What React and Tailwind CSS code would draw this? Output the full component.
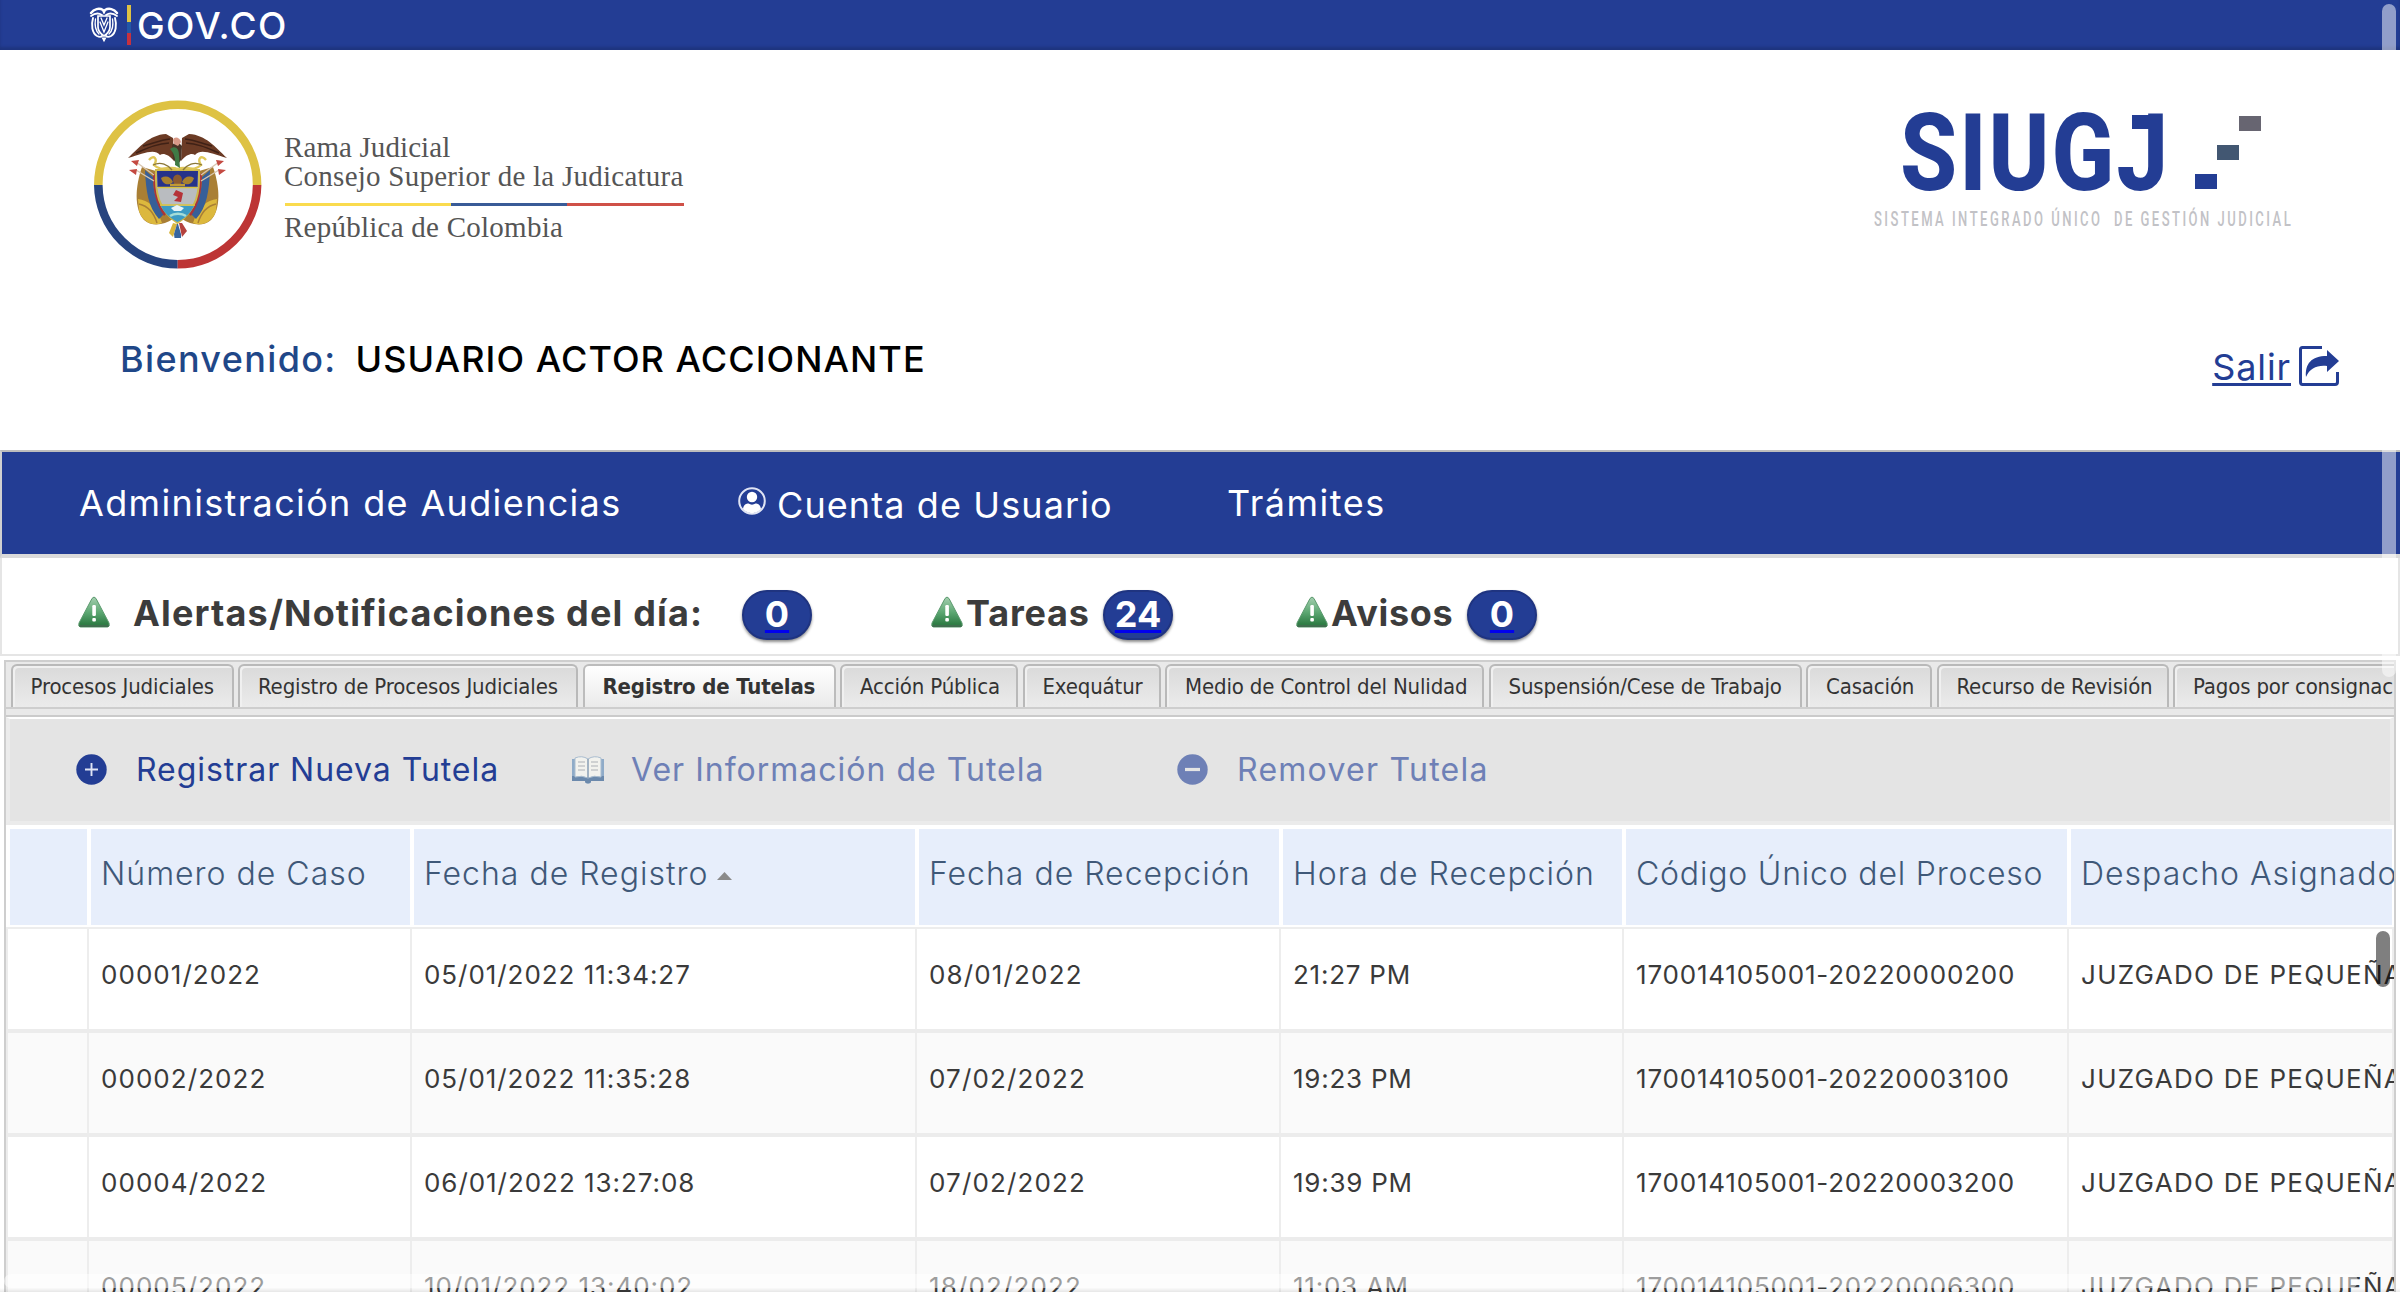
import React from "react";

const TABS = [
  { label: "Procesos Judiciales", width: "w-[223px]" },
  { label: "Registro de Procesos Judiciales", width: "w-[340px]" },
  { label: "Registro de Tutelas", width: "w-[253px]", active: true },
  { label: "Acción Pública", width: "w-[178px]" },
  { label: "Exequátur", width: "w-[138px]" },
  { label: "Medio de Control del Nulidad", width: "w-[319px]" },
  { label: "Suspensión/Cese de Trabajo", width: "w-[313px]" },
  { label: "Casación", width: "w-[126px]" },
  { label: "Recurso de Revisión", width: "w-[232px]" },
  { label: "Pagos por consignación", width: "w-[270px]" },
];

const COLUMNS = [
  "",
  "Número de Caso",
  "Fecha de Registro",
  "Fecha de Recepción",
  "Hora de Recepción",
  "Código Único del Proceso",
  "Despacho Asignado",
];

const ROWS = [
  ["", "00001/2022", "05/01/2022 11:34:27", "08/01/2022", "21:27 PM", "170014105001-20220000200", "JUZGADO DE PEQUEÑAS"],
  ["", "00002/2022", "05/01/2022 11:35:28", "07/02/2022", "19:23 PM", "170014105001-20220003100", "JUZGADO DE PEQUEÑAS"],
  ["", "00004/2022", "06/01/2022 13:27:08", "07/02/2022", "19:39 PM", "170014105001-20220003200", "JUZGADO DE PEQUEÑAS"],
  ["", "00005/2022", "10/01/2022 13:40:02", "18/02/2022", "11:03 AM", "170014105001-20220006300", "JUZGADO DE PEQUEÑAS"],
];

const GRID = "grid grid-cols-[83px_323px_505px_364px_343px_445px_325px]";

const CELL_TRACKING = [
  "tracking-[1px]",
  "tracking-[1.05px]",
  "tracking-[0.95px]",
  "tracking-[1.15px]",
  "tracking-[0.75px]",
  "tracking-[0.8px]",
  "tracking-[1.3px]",
];

function GovShield() {
  return (
    <svg className="h-[36px] w-[30px]" viewBox="0 0 30 36" fill="none" stroke="#fff" strokeLinecap="round">
      <path d="M2 6C5 2 10 0.5 14 3L15 5L16 3C20 0.5 25 2 28 6" strokeWidth="2.4" />
      <path d="M2 9C6 6 10 6 13 8M28 9C24 6 20 6 17 8" strokeWidth="1.8" />
      <path d="M9 9H21V20C21 24 18 27 15 29C12 27 9 24 9 20Z" strokeWidth="1.7" />
      <path d="M4 11C2 18 3 26 8 29C10 30 12 30 13 29M26 11C28 18 27 26 22 29C20 30 18 30 17 29" strokeWidth="1.9" />
      <path d="M6.500 12C5.500 18 7 24 10 27M23.500 12C24.500 18 23 24 20 27M12 11L15 18L18 11M11 15L15 25L19 15" strokeWidth="1.3" />
      <path d="M13.500 31L15 34L16.500 31Z" fill="#fff" strokeWidth="1.2" />
    </svg>
  );
}

function Emblem() {
  return (
    <svg className="h-[170px] w-[168px] shrink-0" viewBox="0 0 168 170">
      <g fill="none" strokeWidth="8.6">
        <path d="M4.300 86A79.400 80.200 0 0 1 163.100 86" stroke="#dec244" />
        <path d="M4.300 86A79.400 80.200 0 0 0 83.700 165.200" stroke="#27447f" />
        <path d="M163.100 86A79.400 80.200 0 0 1 83.700 165.200" stroke="#bd3535" />
      </g>
      {/* flags */}
      <path d="M48 68C41 88 40 110 50 121C58 128 70 126 79 120L62 72Z" fill="#a97f35" />
      <path d="M119 68C126 88 127 110 117 121C109 128 97 126 88 120L105 72Z" fill="#a97f35" />
      <path d="M44 100C54 101 63 108 68 124C58 128 48 122 45 112ZM123 100C113 101 104 108 99 124C109 128 119 122 122 112Z" fill="#dcb83d" />
      <path d="M45 105C54 107 60 114 63 124M122 105C113 107 107 114 104 124" stroke="#a97f35" strokeWidth="1.5" fill="none" />
      <path d="M51 71L59 78C59 93 63 105 70 115L65 120C54 108 52 92 51 71ZM116 71L108 78C108 93 104 105 97 115L102 120C113 108 115 92 116 71Z" fill="#375f98" />
      <path d="M59 74L64 78C63 93 67 105 74 113L70 117C61 104 59 90 59 74ZM108 74L103 78C104 93 100 105 93 113L97 117C106 104 108 90 108 74Z" fill="#a9343a" />
      {/* spears */}
      <path d="M42 63L60 76M42 71L60 82M125 63L107 76M125 71L107 82" stroke="#d8c6b0" strokeWidth="1.4" />
      <path d="M37 62L45 61L43 67ZM35 71L43 70L42 76ZM130 62L122 61L124 67ZM132 71L124 70L125 76Z" fill="#c44a42" />
      {/* shield */}
      <path d="M62 71H105C106 93 103 111 83.500 124C64 111 61 93 62 71Z" fill="#b9bcc0" stroke="#cdb94d" strokeWidth="2" />
      <path d="M63 72H104L103.500 88H63.500Z" fill="#26328a" />
      <path d="M67 79C72 76 77 78 79 83C75 87 69 86 67 79ZM100 79C95 76 90 78 88 83C92 87 98 86 100 79Z" fill="#a8812f" />
      <ellipse cx="83.500" cy="81" rx="4.500" ry="5.500" fill="#8b5b30" />
      <path d="M76 86H91" stroke="#c19a36" strokeWidth="2.5" />
      <path d="M64 88.500H103M66 106H101" stroke="#d8c23f" strokeWidth="1.4" />
      <path d="M82 91L89 94L87 103L80 102L84 98L79 96Z" fill="#b53238" />
      <path d="M67 107H100C96 115 90 120 83.500 123C76 119 70 114 67 107Z" fill="#3c9bc4" />
      <path d="M77 109L83 106L90 109L87 112H80Z" fill="#e8f3f7" />
      <path d="M76 117C80 114 88 114 92 117" stroke="#a5ddd7" strokeWidth="2.5" fill="none" />
      {/* ribbon and laurel */}
      <path d="M55 61C60 55 64 60 60 66C68 74 75 66 83.500 70C92 66 99 74 107 66C103 60 107 55 112 61" stroke="#dfc758" strokeWidth="2.4" fill="none" />
      <path d="M59 66C67 62 74 66 78 71M108 66C100 62 93 66 89 71" stroke="#8a7738" strokeWidth="1.3" fill="none" />
      {/* condor */}
      <path d="M34 59C46 48 55 36 72 35L79 39L80 62C74 55 69 54 66 56C60 49 49 55 34 59Z" fill="#6b3b25" />
      <path d="M133 59C121 48 112 36 95 35L88 39L87 62C93 55 98 54 101 56C107 49 118 55 133 59Z" fill="#6b3b25" />
      <path d="M42 54C54 49 62 45 75 44M49 47C58 45 66 41 76 40M125 54C113 49 105 45 92 44M118 47C109 45 101 41 91 40" stroke="#3f2116" strokeWidth="1.5" fill="none" />
      <path d="M78 46L83 42L88 47L87 61L83.500 66L79 60Z" fill="#4a3426" />
      <path d="M79 41C80 37 86 38 87 43L84 47L80 45Z" fill="#d99a88" />
      <path d="M76 50C81 46 85 49 85 56L86 69L81 66C82 58 79 53 76 50Z" fill="#3f7a45" />
      {/* tassels */}
      <path d="M79 124L75 134L79 138L83 125Z" fill="#d8b53e" />
      <path d="M83 125L80 135L80.500 139H87L87 135L84 125Z" fill="#37659f" />
      <path d="M85 124L88 138L93 132L88 124Z" fill="#b5423e" />
    </svg>
  );
}

function ExitIcon() {
  return (
    <svg className="h-[40px] w-[40px]" viewBox="0 0 40 40">
      <path d="M23 1.500H3.500Q1.500 1.500 1.500 3.500V36Q1.500 38.500 3.500 38.500H36Q38.500 38.500 38.500 36V26" fill="none" stroke="#233d94" strokeWidth="3" />
      <path d="M7 31C6 18 12 10 28 10V4L40 15L28 26V20C18 19 11 22 7 31Z" fill="#233d94" />
    </svg>
  );
}

function UserIcon() {
  return (
    <svg className="-mt-1 h-[30px] w-[30px]" viewBox="0 0 30 30">
      <circle cx="15" cy="15" r="12.800" fill="none" stroke="#dfe4f4" strokeWidth="2" />
      <circle cx="15" cy="11" r="5.200" fill="#fff" />
      <path d="M6 23C6.500 18.500 9.500 17.500 11.500 17.500C13.500 19 16.500 19 18.500 17.500C20.500 17.500 23.500 18.500 24 23C19 28.500 11 28.500 6 23Z" fill="#fff" />
    </svg>
  );
}

function AlertIcon() {
  return (
    <svg className="-mt-1.5 h-[32px] w-[32px] shrink-0" viewBox="0 0 32 32">
      <defs>
        <linearGradient id="alertFill" x1="0" y1="0" x2="0" y2="1">
          <stop offset="0" stopColor="#a5cfb0" />
          <stop offset="0.500" stopColor="#5da873" />
          <stop offset="0.900" stopColor="#2f7d45" />
        </linearGradient>
      </defs>
      <path d="M14 2.500Q16 -0.500 18 2.500L31 27Q32 31 29.500 31H2.500Q0 31 1 27Z" fill="url(#alertFill)" stroke="#5b9a6e" strokeWidth="1" />
      <path d="M1.500 30H30.500" stroke="#3f6e4e" strokeWidth="2" />
      <rect x="14.300" y="9" width="3.600" height="11" rx="1.200" fill="#fff" />
      <rect x="14.300" y="22" width="3.600" height="3.600" rx="1" fill="#fff" />
    </svg>
  );
}

function BookIcon() {
  return (
    <svg className="h-[28px] w-[32px]" viewBox="0 0 32 28">
      <path d="M0 3H32V25H19Q19 27.500 16 27.500Q13 27.500 13 25H0Z" fill="#8fabc8" />
      <path d="M0 20H32V25H19Q19 27.500 16 27.500Q13 27.500 13 25H0Z" fill="#6b89ac" />
      <path d="M3 2Q10 -1 16 3Q22 -1 29 2V21Q22 19 16 22Q10 19 3 21Z" fill="#f2f2ee" stroke="#a9bccf" strokeWidth="1" />
      <path d="M16 3V22" stroke="#8fa3b8" strokeWidth="1.600" />
      <path d="M6 6H13M6 10H13M6 14H13M19 6H26M19 10H26M19 14H26" stroke="#cfd1d2" strokeWidth="2" />
    </svg>
  );
}

function RoundSign({ minus }) {
  return (
    <svg className="-mt-0.5 h-[31px] w-[31px]" viewBox="0 0 31 31">
      <circle cx="15.500" cy="15.500" r="15.200" fill={minus ? "#6e80b6" : "#233d94"} />
      {minus ? (
        <path d="M8 15.500H23" stroke="#e4e4e4" strokeWidth="3.200" />
      ) : (
        <path d="M9 15.500H22M15.500 9V22" stroke="#dfe4f4" strokeWidth="1.900" />
      )}
    </svg>
  );
}

function Counter({ value }) {
  return (
    <span className="flex h-[50px] w-[70px] items-center justify-center rounded-[25px] border-2 border-[#1f3480] bg-[#233d94] text-[36px] leading-none font-bold text-white shadow-[0_2px_3px_rgba(0,0,0,0.45)]">
      <a className="-mt-0.5 underline decoration-[#0000ee] decoration-[3px] underline-offset-[3px] [text-decoration-skip-ink:none]">{value}</a>
    </span>
  );
}

function TopBar() {
  return (
    <div className="relative flex h-[50px] items-center bg-[#233d94] pl-[89px] shadow-[inset_0_-3px_3px_rgba(0,0,0,0.15)]">
      <GovShield />
      <div className="ml-2 flex h-[40px] w-[4px] flex-col">
        <span className="flex-1 bg-[#dec244]" />
        <span className="flex-[0.7] bg-[#2157a8]" />
        <span className="flex-[0.7] bg-[#c6313f]" />
      </div>
      <span className="ml-[6px] pt-px text-[37px] leading-none font-medium tracking-[1.4px] text-white">GOV.CO</span>
      <span className="absolute top-[4px] right-[4px] h-[46px] w-[14px] rounded-t-full bg-white/50" />
    </div>
  );
}

function Header() {
  return (
    <header className="flex h-[400px] flex-col">
      <div className="flex h-[280px] justify-between">
        <div className="flex pt-[49px] pl-[94px]">
          <Emblem />
          <div className="ml-[22px] flex w-[402px] flex-col pt-[34px] font-['Liberation_Serif',serif] text-[29px] leading-[29px] whitespace-nowrap text-[#555]">
            <span className="tracking-[0.1px]">Rama Judicial</span>
            <span className="tracking-[0.25px]">Consejo Superior de la Judicatura</span>
            <div className="mt-[12px] mb-[7px] ml-px flex h-[3px] w-[399px]">
              <span className="w-[166px] bg-[#fadb4e]" />
              <span className="w-[116px] bg-[#395b97]" />
              <span className="w-[117px] bg-[#cf5047]" />
            </div>
            <span className="tracking-[0.25px]">República de Colombia</span>
          </div>
        </div>
        <div className="flex w-[526px] flex-col pt-[62px]">
          <div className="flex h-[82px]">
            <div className="relative ml-[26px] w-[295px]">
              <span className="inline-block origin-left scale-x-[0.86] pt-px font-[Roboto,sans-serif] text-[107px] leading-[82px] font-extrabold tracking-[2.4px] text-[#233d94]">SIUGJ</span>
              <span className="absolute top-[3px] left-[232px] h-[14px] w-[26px] bg-[#233d94]" />
            </div>
            <div className="grid w-[66px] grid-cols-3 grid-rows-[29px_29px_15px] pt-[4px]">
              <span className="col-start-3 row-start-1 h-[15px] bg-[#676571]" />
              <span className="col-start-2 row-start-2 h-[15px] bg-[#425772]" />
              <span className="col-start-1 row-start-3 h-[15px] bg-[#233d94]" />
            </div>
          </div>
          <span className="mt-[13px] inline-block w-[700px] origin-left scale-x-[0.62] font-[Roboto,sans-serif] text-[21px] leading-[24px] font-medium tracking-[4px] whitespace-pre text-[#c2c2c6]">SISTEMA INTEGRADO ÚNICO  DE GESTIÓN JUDICIAL</span>
        </div>
      </div>
      <div className="flex justify-between pr-[61px] pl-[120px] text-[36px] leading-[60px]">
        <div className="-mt-px font-medium">
          <span className="tracking-[1.35px] text-[#1f4788]">Bienvenido:</span>
          <span className="ml-[19px] tracking-[1.05px] text-black">USUARIO ACTOR ACCIONANTE</span>
        </div>
        <div className="flex items-center gap-[8px] pt-[4px] text-[#233d94]">
          <a className="pt-[3px] tracking-[0.9px] underline decoration-[3px] underline-offset-[3px]">Salir</a>
          <ExitIcon />
        </div>
      </div>
    </header>
  );
}

function NavBar() {
  return (
    <nav className="flex h-[108px] items-center border-t-2 border-b-4 border-l-2 border-t-[#bdbdbd] border-b-[#dadada] border-l-[#d0d0d0] bg-[#233d94] text-[36px] leading-none tracking-[1.35px] whitespace-nowrap text-white">
      <span className="w-[655px] pl-[77px]">Administración de Audiencias</span>
      <span className="flex w-[491px] items-center pl-[80px]">
        <UserIcon />
        <span className="ml-[10px] pt-1 tracking-[1.1px]">Cuenta de Usuario</span>
      </span>
      <span className="pl-[79px] tracking-[1.5px]">Trámites</span>
    </nav>
  );
}

function AlertBar() {
  return (
    <div className="flex h-[98px] items-center border-x-2 border-b-2 border-[#e5e5e5] pt-[18px] pl-[76px] text-[36px] leading-none font-bold whitespace-nowrap text-[#3c3c3c]">
      <div className="flex w-[853px] items-center">
        <AlertIcon />
        <span className="-mt-1 ml-[23px] w-[609px] tracking-[1.15px]">Alertas/Notificaciones del día:</span>
        <Counter value="0" />
      </div>
      <div className="flex w-[365px] items-center">
        <AlertIcon />
        <span className="-mt-1 ml-[3px] w-[137px] tracking-[0.8px]">Tareas</span>
        <Counter value="24" />
      </div>
      <div className="flex items-center">
        <AlertIcon />
        <span className="-mt-1 ml-[3px] w-[136px] tracking-[0.7px]">Avisos</span>
        <Counter value="0" />
      </div>
    </div>
  );
}

function Tabs() {
  return (
    <div className="flex h-[55px] flex-col border-b-2 border-[#cbcbcb] bg-[#e9e9e9]">
      <div className="flex h-[47px] gap-[4.5px] overflow-hidden border-b-2 border-[#cecece] pt-0.5 pl-[4.5px] font-['DejaVu_Sans_Condensed',sans-serif] text-[22px] tracking-[-0.15px] whitespace-nowrap text-[#333]">
        {TABS.map((tab) => (
          <div
            key={tab.label}
            className={
              tab.active
                ? `${tab.width} relative z-10 -mb-0.5 flex h-[45px] shrink-0 items-center rounded-t-[6px] border-2 border-b-0 border-[#bcbcbc] bg-linear-to-b from-white to-[#e9e9e9] pb-0.5 pl-[18px] font-bold`
                : `${tab.width} flex shrink-0 items-center rounded-t-[6px] border-2 border-b-0 border-[#b9b9b9] bg-linear-to-b from-[#dadada] to-[#ebebeb] pl-[18px] shadow-[inset_2px_2px_0_#f0f0f0]`
            }
          >
            {tab.label}
          </div>
        ))}
      </div>
    </div>
  );
}

function Toolbar() {
  return (
    <div className="flex h-[108px] items-center border-x-4 border-t-2 border-b-4 border-x-[#ececec] border-t-white border-b-[#ebebeb] bg-[#e4e4e4] text-[32px] leading-none whitespace-nowrap text-[#233d94]">
      <span className="flex w-[562px] items-center pl-[66px]">
        <RoundSign />
        <span className="ml-[29px] tracking-[0.95px]">Registrar Nueva Tutela</span>
      </span>
      <span className="flex w-[605px] items-center text-[#6e80b6]">
        <BookIcon />
        <span className="ml-[27px] tracking-[1px]">Ver Información de Tutela</span>
      </span>
      <span className="flex items-center text-[#6e80b6]">
        <RoundSign minus />
        <span className="ml-[29px] tracking-[1.25px]">Remover Tutela</span>
      </span>
    </div>
  );
}

function DataTable() {
  return (
    <div className="relative h-[469px] overflow-hidden bg-white">
      <div className={`${GRID} h-[104px] border-b-2 border-[#ededed] pt-1 pb-0.5 text-[32px] leading-none font-light tracking-[1px] whitespace-nowrap text-[#3f5878]`}>
        {COLUMNS.map((column, i) => (
          <div key={i} className={`${i === 0 ? "ml-1" : "ml-0.5"} ${i === 5 ? "tracking-[0.8px]" : ""} mr-0.5 flex items-center bg-[#e7eefb] pb-[7px] pl-[10px]`}>
            {column}
            {column === "Fecha de Registro" && (
              <svg className="mt-1 ml-[9px] h-[8px] w-[15px]" viewBox="0 0 15 8">
                <path d="M7.500 0L15 8H0Z" fill="#8a8a8a" />
              </svg>
            )}
          </div>
        ))}
      </div>
      {ROWS.map((row, r) => (
        <div
          key={row[1]}
          className={`${GRID} ${r % 2 ? "bg-[#fafafa]" : "bg-white"} h-[104px] border-b-4 border-l-2 border-[#ececec] text-[26px] leading-none whitespace-nowrap text-[#3a3a3a]`}
        >
          {row.map((cell, c) => (
            <div key={c} className={`${CELL_TRACKING[c]} relative -left-0.5 flex items-center border-r-2 border-[#ededed] pb-[8px] pl-[12px]`}>
              {cell}
            </div>
          ))}
        </div>
      ))}
      <span className="absolute top-[106px] right-[4px] h-[56px] w-[14px] rounded-full bg-black/50" />
    </div>
  );
}

export default function App() {
  return (
    <div className="relative h-[1292px] w-[2400px] overflow-hidden bg-white font-[Inter,sans-serif]">
      <TopBar />
      <Header />
      <NavBar />
      <AlertBar />
      <main className="mt-[4px] mr-[4px] ml-1 h-[632px] overflow-hidden border-x-2 border-t-2 border-[#cecece]">
        <Tabs />
        <Toolbar />
        <DataTable />
      </main>
      <span className="absolute top-[450px] right-[4px] h-[227px] w-[14px] rounded-b-full bg-white/50" />
      <span className="absolute top-[1274px] left-[4px] h-[14px] w-[2354px] rounded-full bg-white/50" />
      <span className="absolute bottom-0 left-0 h-[4px] w-full bg-linear-to-b from-transparent to-black/8" />
    </div>
  );
}
